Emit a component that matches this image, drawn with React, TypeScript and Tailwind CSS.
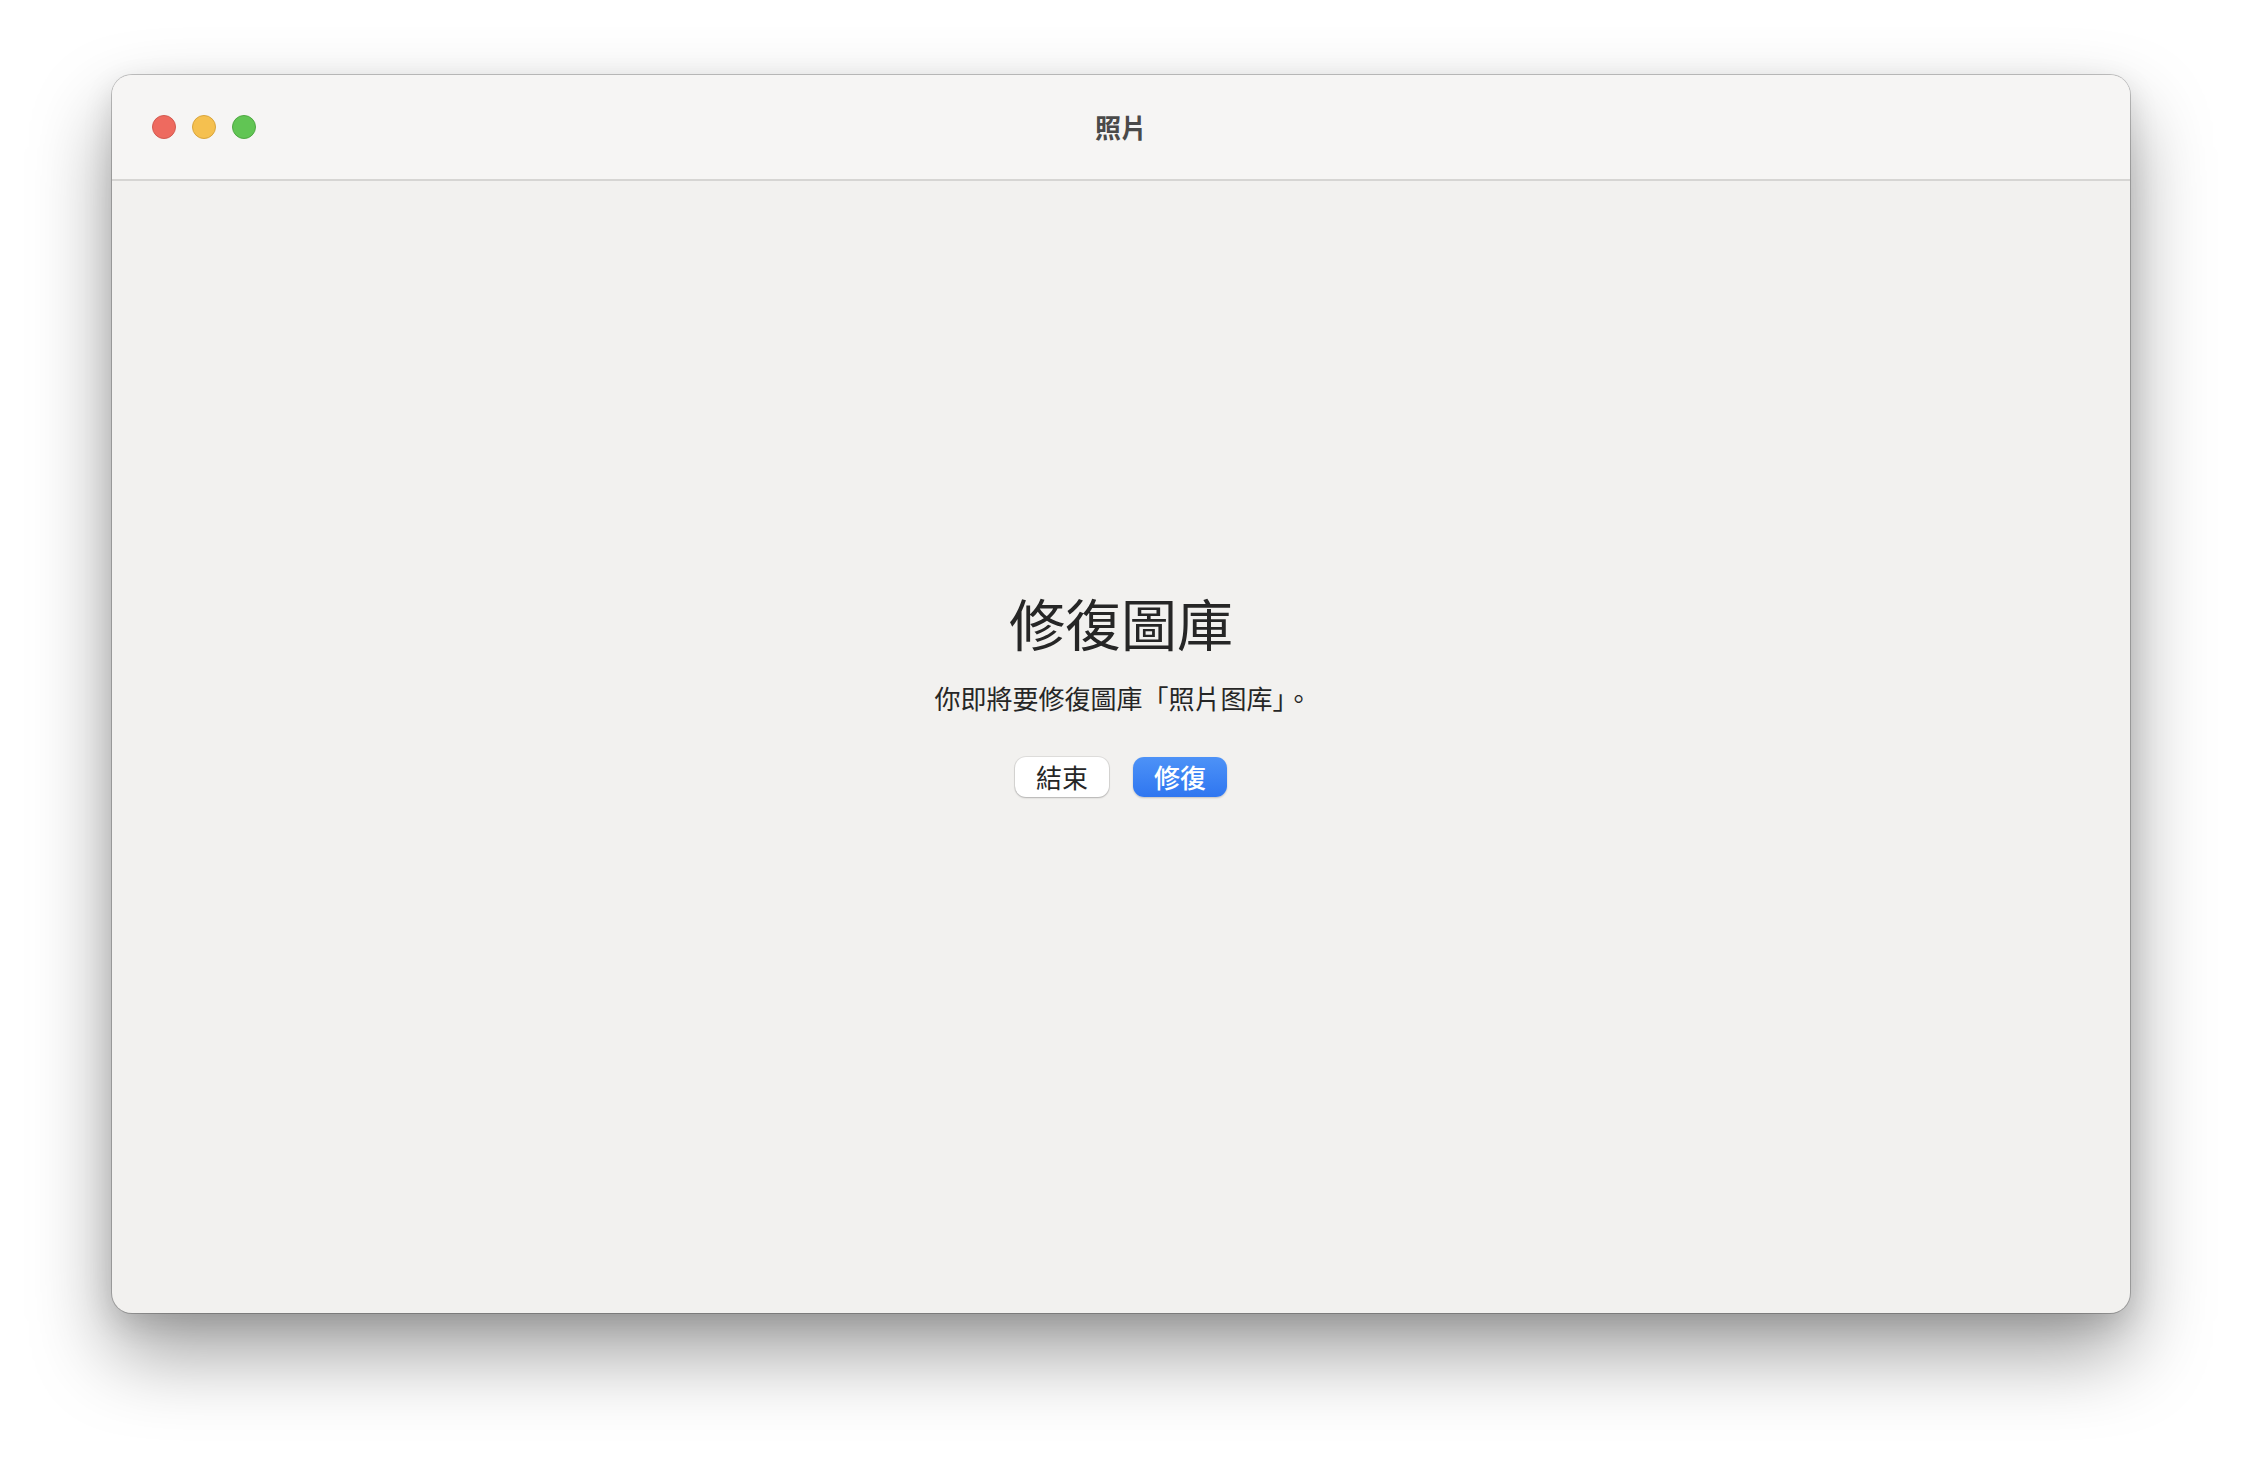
import React from "react";

export default function App() {
  const font = { fontFamily: '"Noto Sans CJK TC", "Noto Sans", sans-serif' };
  return (
    <div className="w-[2242px] h-[1462px] bg-white pt-[75px] pl-[112px]" style={font}>
      <div className="w-[2018px] h-[1238px] rounded-[20px] bg-[#f2f1ef] flex flex-col overflow-hidden shadow-[0_0_0_1px_rgba(0,0,0,0.22),0_40px_80px_rgba(0,0,0,0.38),0_10px_30px_rgba(0,0,0,0.12)]">
        <div className="h-[106px] shrink-0 bg-[#f6f5f4] border-b-2 border-[#d6d5d3] relative flex items-center">
          <div className="flex items-center gap-[16px] pl-[40px]">
            <div className="w-[24px] h-[24px] rounded-full bg-[#ee6a5f] border border-[#d35a50]" />
            <div className="w-[24px] h-[24px] rounded-full bg-[#f5c04f] border border-[#d9a53c]" />
            <div className="w-[24px] h-[24px] rounded-full bg-[#61c554] border border-[#4fa843]" />
          </div>
          <div className="absolute inset-0 flex items-center justify-center">
            <span className="text-[26px] font-bold text-[#4a4a4a] leading-none">照片</span>
          </div>
        </div>
        <div className="flex-1 flex flex-col items-center pt-[407px]">
          <div className="text-[56px] leading-[68px] text-[#262626] font-normal">修復圖庫</div>
          <div className="mt-[25px] text-[26px] leading-[34px] text-[#262626] pl-[4px]">你即將要修復圖庫「照片图库」。</div>
          <div className="mt-[42px] flex gap-[24px]">
            <button className="w-[94px] h-[40px] rounded-[11px] bg-white text-[#262626] text-[26px] leading-none shadow-[0_0_0_1px_rgba(0,0,0,0.08),0_1px_2px_rgba(0,0,0,0.2)] flex items-center justify-center" style={font}>
              結束
            </button>
            <button className="w-[94px] h-[40px] rounded-[11px] bg-gradient-to-b from-[#4d92f7] to-[#2f76f0] text-white text-[26px] leading-none font-medium shadow-[0_1px_2px_rgba(0,0,0,0.2)] flex items-center justify-center" style={font}>
              修復
            </button>
          </div>
        </div>
      </div>
    </div>
  );
}
